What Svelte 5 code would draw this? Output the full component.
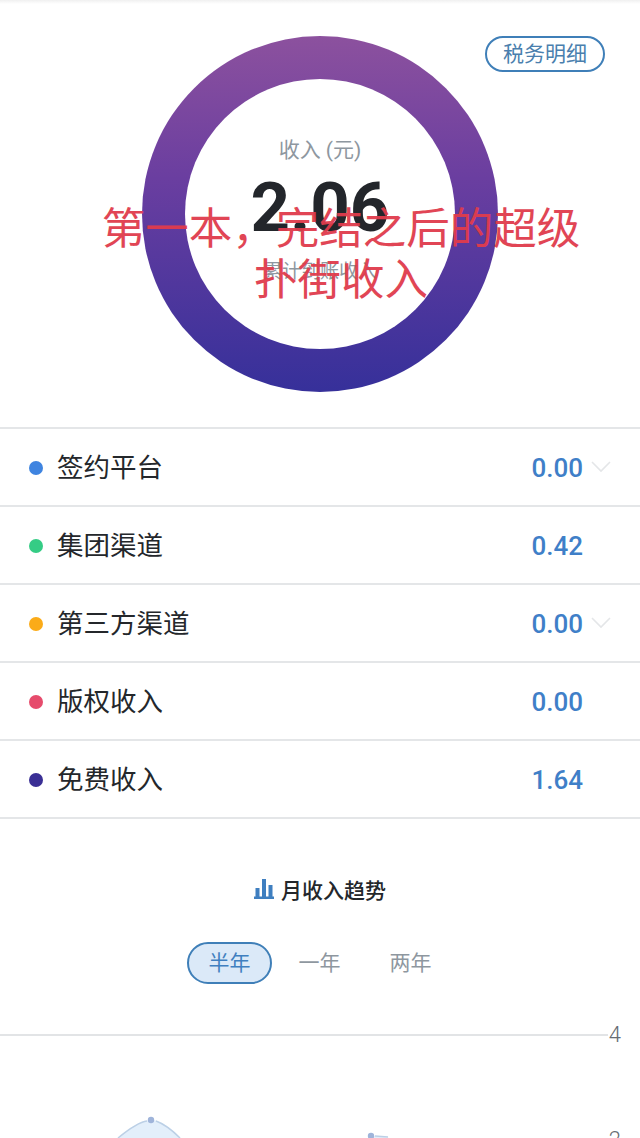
<script lang="ts">
  const rows = [
    { name: "签约平台", value: "0.00", color: "#3f84e0", more: true },
    { name: "集团渠道", value: "0.42", color: "#35cc85", more: false },
    { name: "第三方渠道", value: "0.00", color: "#fbab18", more: true },
    { name: "版权收入", value: "0.00", color: "#e64b6c", more: false },
    { name: "免费收入", value: "1.64", color: "#3a2f95", more: false },
  ];
  const ranges = ["半年", "一年", "两年"];
  let active = $state("半年");
</script>

<main class="page">
  <section class="hero">
    <button type="button" class="tax">税务明细</button>
    <div class="ring">
      <div class="ring-inner">
        <p class="unit">收入 (元)</p>
        <p class="total">2.06</p>
        <p class="sub">累计到账收入</p>
      </div>
    </div>
    <p class="stamp">第一本&#xFF0C;完结之后的超级<br />扑街收入</p>
  </section>

  <ul class="rows">
    {#each rows as row}
      <li>
        <i class="dot" style="background: {row.color}"></i>
        <span class="name">{row.name}</span>
        <span class="value">{row.value}</span>
        <span class="more">
          {#if row.more}
            <svg width="20" height="12" viewBox="0 0 20 12" fill="none" stroke="#e4e6e8" stroke-width="1.6">
              <path d="M1 1l9 9 9-9" />
            </svg>
          {/if}
        </span>
      </li>
    {/each}
  </ul>

  <h2 class="trend">
    <svg width="20" height="20" viewBox="0 0 20 20" fill="#3f7fc0">
      <rect x="0" y="17.5" width="20" height="2.5" />
      <rect x="1.5" y="9" width="4" height="9" />
      <rect x="8" y="0" width="4" height="18" />
      <rect x="14.5" y="6" width="4" height="12" />
    </svg>
    月收入趋势
  </h2>

  <div class="tabs">
    {#each ranges as range}
      <button type="button" class:on={active === range} onclick={() => (active = range)}>{range}</button>
    {/each}
  </div>

  <div class="chart">
    <div class="grid-line"></div>
    <span class="tick tick-4">4</span>
    <span class="tick tick-2">2</span>
    <svg class="plot" width="640" height="110" viewBox="0 0 640 110">
      <path d="M116 106C128 96 140 86 151 86C162 86 172 95 182 106V110H116Z" fill="#e3effb" />
      <path d="M118 104C129 95 139 88 147 87M156 87C164 90 172 96 180 104" fill="none" stroke="#bcd0e6" stroke-width="1.5" />
      <circle cx="151" cy="86" r="3.2" fill="#9fb4da" />
      <path d="M371 102C390 103 400 106 412 110H371Z" fill="#e3effb" />
      <circle cx="371" cy="102" r="3.2" fill="#9fb4da" />
      <path d="M375 102L388 103" stroke="#bcd0e6" stroke-width="1.5" />
    </svg>
  </div>
</main>

<style>
  :global(body) {
    margin: 0;
    background: #fff;
  }

  .page {
    height: 1138px;
    overflow: hidden;
    font-family: Roboto, "Noto Sans CJK SC", sans-serif;
    color: #24272b;
    background: linear-gradient(#f0f0f0, #fff 4px);
  }

  p {
    margin: 0;
  }

  .hero {
    position: relative;
    height: 427px;
    box-sizing: border-box;
    padding-top: 36px;
    display: flex;
    justify-content: center;
  }

  .tax {
    position: absolute;
    top: 36px;
    right: 35px;
    width: 120px;
    height: 36px;
    padding: 0 0 4px;
    box-sizing: border-box;
    border: 2px solid #3f7fb8;
    border-radius: 18px;
    background: #fff;
    color: #4a7fae;
    font: 21px/1 "Noto Sans CJK SC", sans-serif;
  }

  .ring {
    width: 356px;
    height: 356px;
    box-sizing: border-box;
    padding: 43px;
    border-radius: 50%;
    background: linear-gradient(#8c519e, #6a3ea0 40%, #36309a);
  }

  .ring-inner {
    height: 100%;
    border-radius: 50%;
    background: #fff;
    display: flex;
    flex-direction: column;
    align-items: center;
    text-align: center;
  }

  .unit {
    margin-top: 57px;
    color: #8e979f;
    font-size: 21px;
    line-height: 28px;
  }

  .total {
    margin-top: 6px;
    font-size: 69px;
    font-weight: 700;
    line-height: 76px;
    color: #23262b;
  }

  .sub {
    margin-top: 13px;
    color: #8e979f;
    font-size: 19px;
    line-height: 26px;
  }

  .stamp {
    position: absolute;
    top: 200px;
    left: 0;
    width: 682px;
    text-align: center;
    color: #e03c4c;
    font: 43.5px/51px "Noto Sans CJK SC", sans-serif;
    opacity: 0.95;
  }

  .rows {
    margin: 0;
    padding: 0;
    list-style: none;
    border-top: 2px solid #e4e6e8;
  }

  .rows li {
    height: 76px;
    display: flex;
    align-items: center;
    padding-left: 29px;
    border-bottom: 2px solid #e4e6e8;
  }

  .dot {
    width: 14px;
    height: 14px;
    border-radius: 50%;
    margin: 1px 14px 0 0;
  }

  .name {
    flex: 1;
    font: 26.5px/36px "Noto Sans CJK SC", sans-serif;
    color: #24272b;
    margin-bottom: 2px;
  }

  .value {
    color: #3f7fc8;
    font-size: 26px;
    font-weight: 500;
    margin-top: 2px;
  }

  .more {
    width: 57px;
    padding-left: 8px;
    box-sizing: border-box;
    display: flex;
  }

  .trend {
    margin: 57px 0 0;
    height: 26px;
    display: flex;
    align-items: center;
    justify-content: center;
    gap: 7px;
    font: 500 21px/26px "Noto Sans CJK SC", sans-serif;
    color: #24272b;
  }

  .tabs {
    margin: 40px 0 0 187px;
    display: flex;
  }

  .tabs button {
    height: 42px;
    width: 85px;
    margin-right: 6px;
    padding: 0 0 4px;
    box-sizing: border-box;
    border: 2px solid transparent;
    border-radius: 21px;
    background: none;
    color: #8e979f;
    font: 21px/1 "Noto Sans CJK SC", sans-serif;
  }

  .tabs button.on {
    border-color: #3f7fb8;
    background: #dbe9f8;
    color: #3f7fc0;
  }

  .tabs button:nth-child(2) {
    margin-left: -1px;
  }

  .chart {
    position: relative;
    margin-top: 50px;
    height: 110px;
  }

  .grid-line {
    width: 608px;
    height: 2px;
    background: #e2e4e6;
  }

  .tick {
    position: absolute;
    right: 19px;
    color: #666c72;
    font-size: 22px;
    font-weight: 300;
    line-height: 24px;
  }

  .tick-4 {
    top: -11px;
  }

  .tick-2 {
    top: 94px;
  }

  .plot {
    position: absolute;
    left: 0;
    top: 0;
  }
</style>
